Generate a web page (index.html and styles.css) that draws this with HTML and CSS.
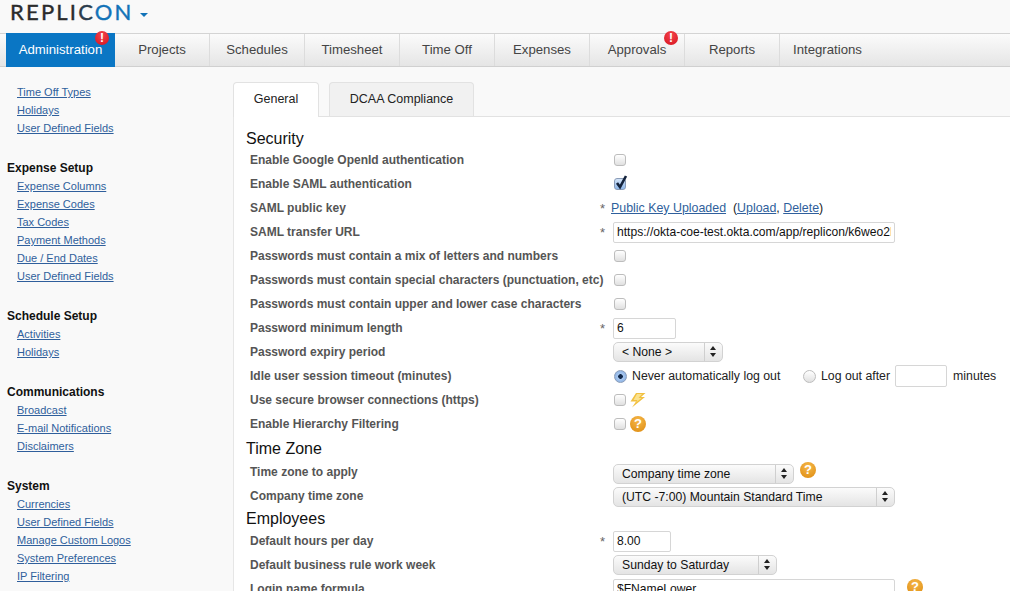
FILE: index.html
```html
<!doctype html>
<html lang="en">

	<head>
		<meta charset="UTF-8">
		<title>Replicon - Administration</title>
		<link rel="stylesheet" href="styles.css">
	</head>

	<body>
		<div class="logo-bar">
			<span class="logo">REPLI<span class="logo-dim">C</span><span class="logo-blue">ON</span></span>
			<span class="logo-caret"></span>
		</div>

		<ul class="nav">
			<li class="nav-item nav-active">Administration<span class="badge badge-admin">!</span></li>
			<li class="nav-item">Projects</li>
			<li class="nav-item">Schedules</li>
			<li class="nav-item">Timesheet</li>
			<li class="nav-item">Time Off</li>
			<li class="nav-item">Expenses</li>
			<li class="nav-item">Approvals<span class="badge badge-approvals">!</span></li>
			<li class="nav-item">Reports</li>
			<li class="nav-item nav-last">Integrations</li>
		</ul>

		<div class="main">
			<div class="sidebar">
				<div class="side-group">
					<a href="#">Time Off Types</a>
					<a href="#">Holidays</a>
					<a href="#">User Defined Fields</a>
				</div>
				<div class="side-group">
					<h4>Expense Setup</h4>
					<a href="#">Expense Columns</a>
					<a href="#">Expense Codes</a>
					<a href="#">Tax Codes</a>
					<a href="#">Payment Methods</a>
					<a href="#">Due / End Dates</a>
					<a href="#">User Defined Fields</a>
				</div>
				<div class="side-group">
					<h4>Schedule Setup</h4>
					<a href="#">Activities</a>
					<a href="#">Holidays</a>
				</div>
				<div class="side-group">
					<h4>Communications</h4>
					<a href="#">Broadcast</a>
					<a href="#">E-mail Notifications</a>
					<a href="#">Disclaimers</a>
				</div>
				<div class="side-group">
					<h4>System</h4>
					<a href="#">Currencies</a>
					<a href="#">User Defined Fields</a>
					<a href="#">Manage Custom Logos</a>
					<a href="#">System Preferences</a>
					<a href="#">IP Filtering</a>
				</div>
			</div>

			<div class="content">
				<div class="tabs">
					<div class="tab tab-on">General</div>
					<div class="tab">DCAA Compliance</div>
				</div>

				<div class="panel">
					<h3 class="section">Security</h3>

					<div class="row">
						<label>Enable Google OpenId authentication</label><span class="req"></span>
						<div class="field"><input type="checkbox" class="cb"></div>
					</div>
					<div class="row">
						<label>Enable SAML authentication</label><span class="req"></span>
						<div class="field">
							<span class="cb-wrap">
								<input type="checkbox" class="cb cb-on" checked>
								<svg class="tick" width="14" height="16" viewBox="0 0 14 16"><path d="M3 9 L6 13 L12 2" fill="none" stroke="#14233c" stroke-width="2.6"/></svg>
							</span>
						</div>
					</div>
					<div class="row">
						<label>SAML public key</label><span class="req">*</span>
						<div class="field field-text"><a href="#">Public Key Uploaded</a>&nbsp; (<a href="#">Upload</a>, <a href="#">Delete</a>)</div>
					</div>
					<div class="row">
						<label>SAML transfer URL</label><span class="req">*</span>
						<div class="field"><input type="text" class="txt txt-wide" value="https://okta-coe-test.okta.com/app/replicon/k6weo2Hj3x9"></div>
					</div>
					<div class="row">
						<label>Passwords must contain a mix of letters and numbers</label><span class="req"></span>
						<div class="field"><input type="checkbox" class="cb"></div>
					</div>
					<div class="row">
						<label>Passwords must contain special characters (punctuation, etc)</label><span class="req"></span>
						<div class="field"><input type="checkbox" class="cb"></div>
					</div>
					<div class="row">
						<label>Passwords must contain upper and lower case characters</label><span class="req"></span>
						<div class="field"><input type="checkbox" class="cb"></div>
					</div>
					<div class="row">
						<label>Password minimum length</label><span class="req">*</span>
						<div class="field"><input type="text" class="txt txt-min" value="6"></div>
					</div>
					<div class="row">
						<label>Password expiry period</label><span class="req"></span>
						<div class="field">
							<div class="sel sel-none"><span class="sel-text">&lt; None &gt;</span><span class="sel-arrows"></span></div>
						</div>
					</div>
					<div class="row">
						<label>Idle user session timeout (minutes)</label><span class="req"></span>
						<div class="field field-idle">
							<input type="radio" class="rad rad-on" name="idle" checked>
							<span class="rad-label rad-label-first">Never automatically log out</span>
							<input type="radio" class="rad" name="idle">
							<span class="rad-label">Log out after</span>
							<input type="text" class="txt txt-after">
							<span>minutes</span>
						</div>
					</div>
					<div class="row">
						<label>Use secure browser connections (https)</label><span class="req"></span>
						<div class="field">
							<input type="checkbox" class="cb">
							<svg class="bolt" width="16" height="15" viewBox="0 0 16 15"><path d="M6 0 L15.5 0 L11 4 L15 4 L2 14.5 L6 8.5 L0.5 8.5 Z" fill="#f1c040"/><path d="M7 1 L12 1 L8.5 5 L11.5 5 L6 9.5 L7.5 7 L3.5 7 Z" fill="#fbe28e"/></svg>
						</div>
					</div>
					<div class="row">
						<label>Enable Hierarchy Filtering</label><span class="req"></span>
						<div class="field"><input type="checkbox" class="cb"><span class="help">?</span></div>
					</div>

					<h3 class="section section-zone">Time Zone</h3>

					<div class="row">
						<label>Time zone to apply</label><span class="req"></span>
						<div class="field">
							<div class="sel sel-zone"><span class="sel-text">Company time zone</span><span class="sel-arrows"></span></div>
							<span class="help help-up">?</span>
						</div>
					</div>
					<div class="row">
						<label>Company time zone</label><span class="req"></span>
						<div class="field">
							<div class="sel sel-wide"><span class="sel-text">(UTC -7:00) Mountain Standard Time</span><span class="sel-arrows"></span></div>
						</div>
					</div>

					<h3 class="section section-emp">Employees</h3>

					<div class="row">
						<label>Default hours per day</label><span class="req">*</span>
						<div class="field"><input type="text" class="txt txt-hours" value="8.00"></div>
					</div>
					<div class="row">
						<label>Default business rule work week</label><span class="req"></span>
						<div class="field">
							<div class="sel sel-week"><span class="sel-text">Sunday to Saturday</span><span class="sel-arrows"></span></div>
						</div>
					</div>
					<div class="row">
						<label>Login name formula</label><span class="req"></span>
						<div class="field">
							<input type="text" class="txt txt-wide" value="$FNameLower">
							<span class="help help-login">?</span>
						</div>
					</div>
				</div>
			</div>
		</div>
	</body>

</html>
```

FILE: styles.css
```css
html,
body {
	margin: 0;
	padding: 0;
	height: 100%;
	overflow: hidden;
}

body {
	background-color: #f9f9f9;
	font-family: "Liberation Sans", Arial, sans-serif;
	font-size: 13px;
	color: #222222;
}

ul,
li {
	list-style: none;
	margin: 0;
	padding: 0;
}

a {
	color: #2f5f9c;
	text-decoration: underline;
}

/* logo */
.logo-bar {
	height: 33px;
	padding-left: 10px;
	display: flex;
	align-items: flex-start;
}

.logo {
	font-family: "Lato", "Liberation Sans", sans-serif;
	font-size: 22px;
	line-height: 24px;
	letter-spacing: 2.2px;
	color: #2b2b2b;
	-webkit-text-stroke: 0.4px;
}

.logo-dim {
	color: #2b3c4c;
}

.logo-blue {
	color: #1273b8;
}

.logo-caret {
	width: 0;
	height: 0;
	margin: 13px 0 0 6px;
	border-left: 4px solid transparent;
	border-right: 4px solid transparent;
	border-top: 4px solid #1273b8;
}

/* main nav */
.nav {
	display: flex;
	height: 32px;
	padding-left: 6px;
	border-top: 1px solid #d4d4d4;
	border-bottom: 1px solid #d0d0d0;
	background: linear-gradient(#fbfbfb, #e5e5e5);
}

.nav-item {
	width: 94px;
	position: relative;
	text-align: center;
	line-height: 32px;
	font-size: 13.2px;
	color: #444444;
	border-right: 1px solid #dcdcdc;
}

.nav-active {
	width: 109px;
	height: 34px;
	margin-top: -1px;
	line-height: 34px;
	color: #ffffff;
	background-color: #0a76c4;
	border-right: 0;
}

.nav-last {
	border-right: 0;
	width: auto;
	padding-left: 13px;
}

.badge {
	position: absolute;
	top: -3px;
	width: 14px;
	height: 14px;
	border-radius: 50%;
	background: radial-gradient(circle at 50% 30%, #f4444c, #d5121e);
	color: #ffffff;
	font-size: 12px;
	font-weight: bold;
	line-height: 14px;
	text-align: center;
}

.badge-admin {
	top: -2px;
	left: 89px;
}

.badge-approvals {
	left: 74px;
}

/* sidebar */
.main {
	display: flex;
}

.sidebar {
	width: 233px;
	flex-shrink: 0;
	padding-top: 16px;
	box-sizing: border-box;
}

.side-group {
	margin-bottom: 22px;
	padding-left: 17px;
}

.side-group a {
	display: block;
	height: 18px;
	line-height: 18px;
	font-size: 11px;
}

.side-group h4 {
	margin: 0 0 0 -10px;
	height: 18px;
	line-height: 18px;
	font-size: 12px;
	color: #111111;
}

/* tabs */
.content {
	flex: 1;
	padding-top: 15px;
}

.tabs {
	display: flex;
	height: 34px;
}

.tab {
	width: 143px;
	height: 33px;
	line-height: 33px;
	margin-left: 10px;
	text-align: center;
	font-size: 12.5px;
	color: #222222;
	background-color: #f1f1f1;
	border: 1px solid #e2e2e2;
	border-bottom: 0;
	border-radius: 4px 4px 0 0;
}

.tab-on {
	width: 84px;
	height: 34px;
	margin-left: 0;
	position: relative;
	z-index: 2;
	background-color: #ffffff;
}

.panel {
	height: 500px;
	padding-left: 12px;
	background-color: #ffffff;
	border-top: 1px solid #e2e2e2;
	border-left: 1px solid #e6e6e6;
	box-sizing: border-box;
	padding-top: 9px;
}

.section {
	margin: 0;
	height: 22px;
	line-height: 25px;
	font-size: 16px;
	font-weight: normal;
	color: #111111;
}

.section-zone {
	height: 24px;
	line-height: 26px;
}

.section-emp {
	height: 21px;
	line-height: 21px;
}

/* form rows */
.row {
	display: flex;
	align-items: center;
	height: 24px;
	padding-left: 4px;
}

.row label {
	width: 350px;
	flex-shrink: 0;
	font-size: 12px;
	font-weight: bold;
	color: #555555;
	white-space: nowrap;
}

.req {
	width: 13px;
	flex-shrink: 0;
	font-size: 13px;
	color: #666666;
}

.field {
	display: flex;
	align-items: center;
	white-space: nowrap;
}

.field-text {
	font-size: 12.4px;
	display: block;
	margin-left: -2px;
}

.field-idle {
	font-size: 12.3px;
}

.cb,
.rad {
	-webkit-appearance: none;
	appearance: none;
	margin: 0 0 0 1px;
	background: linear-gradient(#ffffff, #e0e0e0);
	border: 1px solid #bdbdbd;
}

.cb {
	width: 12px;
	height: 12px;
	border-radius: 3px;
}

.cb-wrap {
	position: relative;
	display: block;
	height: 12px;
	width: 13px;
}

.cb-on {
	display: block;
	background: linear-gradient(#d4e4f8, #8fb8ea);
	border-color: #8a9cb8;
}

.tick {
	position: absolute;
	top: -4px;
	left: 1px;
}

.rad {
	flex-shrink: 0;
	width: 13px;
	height: 13px;
	border-radius: 50%;
}

.rad-on {
	background: radial-gradient(circle, #12294a 0, #12294a 2px, #a9c8ef 2.6px, #7fa9e0 100%);
	border-color: #8a9cb8;
}

.rad-label {
	margin-left: 5px;
}

.rad-label-first {
	width: 170px;
}

.txt {
	box-sizing: border-box;
	height: 21px;
	padding: 0 3px;
	margin: 0;
	font-family: inherit;
	font-size: 12.1px;
	color: #111111;
	background-color: #ffffff;
	border: 1px solid #d6d6d6;
	border-radius: 2px;
	outline: 0;
}

.txt-wide {
	width: 282px;
}

.txt-min {
	width: 63px;
}

.txt-hours {
	width: 58px;
}

.txt-after {
	width: 52px;
	height: 22px;
	margin: 0 6px 0 5px;
}

.sel {
	box-sizing: border-box;
	display: flex;
	height: 20px;
	line-height: 18px;
	font-size: 12.2px;
	color: #111111;
	background: linear-gradient(#fbfbfb, #e4e4e4);
	border: 1px solid #d2d2d2;
	border-radius: 5px;
}

.sel-text {
	flex: 1;
	padding-left: 8px;
}

.sel-arrows {
	position: relative;
	width: 17px;
	border-left: 1px solid #cfcfcf;
}

.sel-arrows::before,
.sel-arrows::after {
	content: "";
	position: absolute;
	left: 5px;
	border-left: 3px solid transparent;
	border-right: 3px solid transparent;
}

.sel-arrows::before {
	top: 3px;
	border-bottom: 4px solid #222222;
}

.sel-arrows::after {
	top: 10px;
	border-top: 4px solid #222222;
}

.sel-none {
	width: 110px;
}

.sel-zone {
	width: 181px;
	margin-top: 4px;
}

.sel-wide {
	width: 282px;
	margin-top: 2px;
}

.sel-week {
	width: 164px;
}

.bolt {
	margin-left: 4px;
}

.help {
	display: block;
	width: 16px;
	height: 16px;
	margin-left: 4px;
	border-radius: 50%;
	background: radial-gradient(circle at 50% 30%, #f6b84a, #dd8a0e);
	color: #ffffff;
	font-size: 13px;
	font-weight: bold;
	line-height: 16px;
	text-align: center;
}

.help-up {
	margin: -4px 0 0 6px;
}

.help-login {
	margin: -4px 0 0 12px;
}
```
